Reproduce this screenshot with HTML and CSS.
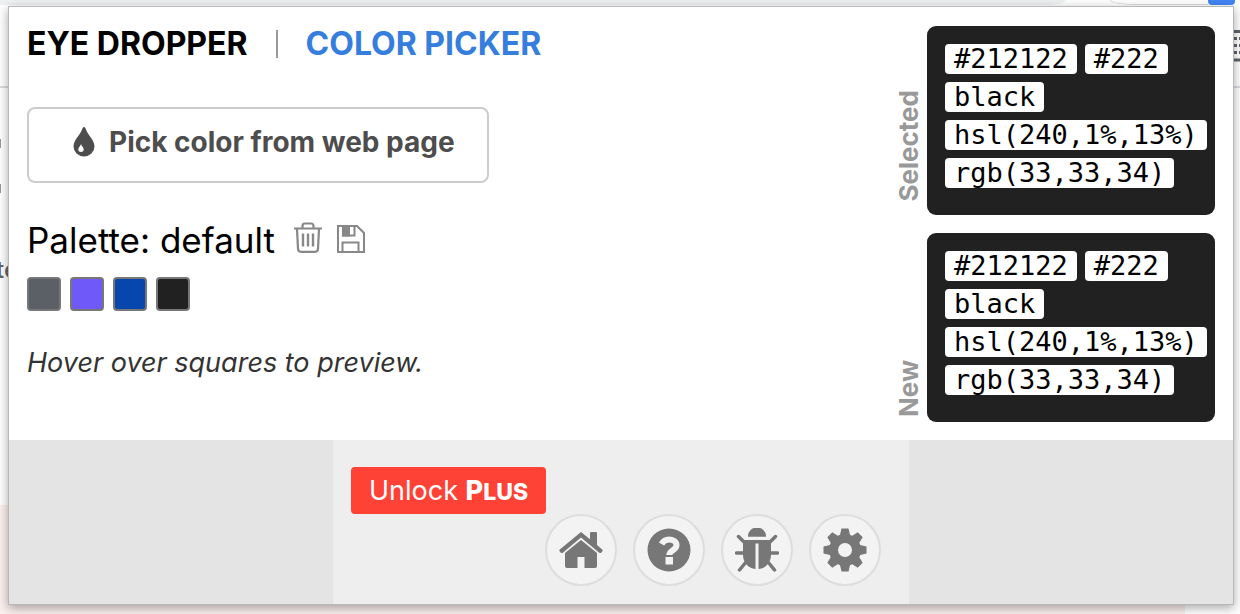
FILE: index.html
```html
<!DOCTYPE html>
<html lang="en">
<head>
<meta charset="UTF-8">
<meta name="viewport" content="width=device-width, initial-scale=1.0">
<title>Eye Dropper</title>
<link rel="stylesheet" href="styles.css">
</head>
<body>

<!-- browser page under the popup -->
<div class="backdrop" aria-hidden="true">
  <div class="tabstrip">
    <span class="tab"></span>
    <span class="avatar"></span>
    <span class="badge"></span>
  </div>
  <div class="toolbar">
    <svg class="ext-icon" width="12" height="32" viewBox="0 0 12 32">
      <path d="M0 1.5h12M0 30h12" stroke="#5f6368" stroke-width="3"/>
      <path d="M6 7h3v3H6zM11 7h3v3h-3zM6 14h3v3H6zM11 14h3v3h-3zM6 21h3v3H6zM11 21h3v3h-3z" fill="#5f6368"/>
    </svg>
  </div>
  <div class="page-top"><span class="mark"></span><span class="mark"></span><span class="page-text">te</span></div>
  <div class="page-bottom"></div>
</div>

<div class="popup">
  <div class="main">
    <div class="left">
      <nav class="tabs">
        <a class="tab-link active" href="#dropper">EYE DROPPER</a>
        <span class="divider"></span>
        <a class="tab-link" href="#picker">COLOR PICKER</a>
      </nav>

      <button class="pick-btn" type="button">
        <svg width="22" height="30" viewBox="0 0 22 30">
          <path d="M11 0C10 0 9.500 1 9 2.500C7 8.500 0.500 13 0.500 19.500a10.500 10 0 0 0 21 0C21.500 13 15 8.500 13 2.500C12.500 1 12 0 11 0z" fill="#4d4d4d"/>
          <path d="M8 17c-.5 2-2.700 3.300-2.700 5.300a2.700 2.700 0 0 0 5.400 0C10.700 20.300 8.500 19 8 17z" fill="#fff"/>
        </svg>
        <span>Pick color from web page</span>
      </button>

      <div class="palette-head">
        <h2>Palette: default</h2>
        <button class="icon-btn" type="button" aria-label="Clear palette">
          <svg width="28" height="32" viewBox="0 0 28 32" fill="none" stroke="#888" stroke-width="2.200">
            <path d="M0 7.500h28M8.500 7V5q0-2.500 2.500-2.500h6q2.500 0 2.500 2.500v2"/>
            <path d="M3 8l1 20q.2 2.800 3 2.800h14q2.800 0 3-2.800L25 8"/>
            <path d="M9 12.500v13M14 12.500v13M19 12.500v13" stroke-width="2.400"/>
          </svg>
        </button>
        <button class="icon-btn" type="button" aria-label="Save palette">
          <svg width="28" height="28" viewBox="0 0 28 28" fill="none" stroke="#888" stroke-width="2">
            <path d="M1 1h19l7 7v19H1z"/>
            <path d="M6 1v9.500h11.500V1M5.500 27v-9.500h16V27"/>
            <path d="M6 1h6v9.500H6z" fill="#888"/>
          </svg>
        </button>
      </div>

      <div class="swatches">
        <button class="swatch slate" type="button" aria-label="Slate"></button>
        <button class="swatch violet" type="button" aria-label="Violet"></button>
        <button class="swatch blue" type="button" aria-label="Blue"></button>
        <button class="swatch black" type="button" aria-label="Black"></button>
      </div>

      <p class="hint">Hover over squares to preview.</p>
    </div>

    <div class="right">
      <div class="labels">
        <span class="label">Selected</span>
        <span class="label">New</span>
      </div>
      <div class="boxes">
        <div class="color-box">
          <code>#212122</code>
          <code>#222</code>
          <code>black</code>
          <code>hsl(240,1%,13%)</code>
          <code>rgb(33,33,34)</code>
        </div>
        <div class="color-box">
          <code>#212122</code>
          <code>#222</code>
          <code>black</code>
          <code>hsl(240,1%,13%)</code>
          <code>rgb(33,33,34)</code>
        </div>
      </div>
    </div>
  </div>

  <footer class="footer">
    <div class="footer-inner">
      <a class="unlock" href="#plus">Unlock <b>P<small>LUS</small></b></a>
      <div class="links">
        <a class="round" href="#home" aria-label="Home">
          <svg width="44" height="44" viewBox="0 0 44 44" fill="#777">
            <path d="M22 4L.8 21.500q-1 1 0 2l1 1.200q1 .8 2 0L22 9.500l18.200 15.200q1 .8 2 0l1-1.200q1-1 0-2L38 17V5q0-1-1-1h-5q-1 0-1 1v6.300z"/>
            <path d="M22 12L6 25v13q0 2 2 2h10.500V29h7v11H36q2 0 2-2V25z"/>
          </svg>
        </a>
        <a class="round" href="#help" aria-label="Help">
          <svg width="44" height="44" viewBox="0 0 44 44">
            <circle cx="22" cy="22" r="21.500" fill="#777"/>
            <path d="M14.500 16c1.700-3 4-4.500 7.400-4.500c4 0 7.600 2.200 7.600 5.800c0 5-7.200 4.700-7.200 9.700" fill="none" stroke="#f3f3f3" stroke-width="6"/>
            <path d="M18.500 29h7.500v7.500h-7.500z" fill="#f3f3f3"/>
          </svg>
        </a>
        <a class="round" href="#bugs" aria-label="Report a bug">
          <svg width="44" height="44" viewBox="0 0 44 44" fill="#777">
            <path d="M13 8a9 8.500 0 0 1 18 0v.7H13z"/>
            <path d="M8 12h28v15c0 7-5 13.500-12.500 14V15.500h-3V41C13 40.500 8 34 8 27z"/>
            <path d="M9 14L3.500 8.500M35 14l5.500-5.500M9 25H1.500M35 25h7.500M11 34l-6.500 8M33 34l6.500 8" fill="none" stroke="#777" stroke-width="3.500" stroke-linecap="round"/>
          </svg>
        </a>
        <a class="round" href="#settings" aria-label="Settings">
          <svg width="44" height="44" viewBox="0 0 44 44">
            <g fill="#777">
              <circle cx="22" cy="22" r="16"/>
              <path id="tooth" d="M16.500 9L18.500 .5h7L27.500 9v26l-2 8.500h-7L16.500 35z"/>
              <use href="#tooth" transform="rotate(45 22 22)"/>
              <use href="#tooth" transform="rotate(90 22 22)"/>
              <use href="#tooth" transform="rotate(135 22 22)"/>
            </g>
            <circle cx="22" cy="22" r="7" fill="#f3f3f3"/>
          </svg>
        </a>
      </div>
    </div>
  </footer>
</div>

</body>
</html>
```

FILE: styles.css
```css
* {
  box-sizing: border-box;
}
body {
  position: relative;
  display: flex;
  min-height: 100vh;
  margin: 0;
  padding: 6px 6px 9px 8px;
  font-family: Inter, "Liberation Sans", sans-serif;
  background-color: #fff;
}

/* page behind the popup */
.backdrop {
  position: absolute;
  inset: 0;
  display: flex;
  flex-direction: column;
  overflow: hidden;
}
.tabstrip {
  display: flex;
  height: 5px;
  padding-right: 5px;
  background-color: #fff;
}
.tab {
  flex: 1;
  margin-right: 45px;
  background-color: #edf1f2;
  border-bottom-right-radius: 16px 5px;
}
.avatar {
  width: 98px;
  border-bottom: 1px solid #ddd;
  border-left: 1px solid #ddd;
  border-bottom-left-radius: 24px 5px;
}
.badge {
  width: 27px;
  background-color: #4285f4;
  border-radius: 0 0 4px 4px;
}
.toolbar {
  display: flex;
  align-items: flex-start;
  justify-content: flex-end;
  height: 83px;
  padding-top: 25px;
  border-bottom: 2px solid #dadce0;
}
.page-top {
  display: flex;
  flex-direction: column;
  height: 417px;
  padding-top: 51px;
}
.mark {
  width: 1px;
  height: 9px;
  margin-bottom: 36px;
  background-color: #999;
}
.page-text {
  margin: 27px 0 0 -4px;
  font-size: 24px;
  font-weight: 500;
  line-height: 28px;
  color: #5f6368;
}
.page-bottom {
  flex: 1;
  margin-right: 55px;
  background-color: #fbf0ee;
}

/* popup */
.popup {
  position: relative;
  display: flex;
  flex-direction: column;
  flex: 1;
  background-color: #fff;
  border: 1px solid #b8b8b8;
  box-shadow: 0 3px 10px rgba(0, 0, 0, 0.35);
}
.main {
  display: flex;
  justify-content: space-between;
  flex: 1;
  padding: 19px 18px 18px;
}
.tabs {
  display: flex;
  align-items: center;
  gap: 28px;
  height: 36px;
}
.tab-link {
  font-size: 32px;
  font-weight: bold;
  line-height: 36px;
  color: #357edd;
  text-decoration: none;
}
.tab-link.active {
  color: #000;
}
.divider {
  width: 2px;
  height: 28px;
  background-color: #999;
}
.pick-btn {
  display: flex;
  align-items: center;
  gap: 14px;
  height: 76px;
  margin-top: 45px;
  padding: 0 32px 6px 44px;
  font-family: inherit;
  font-size: 28px;
  font-weight: bold;
  color: #4d4d4d;
  background-color: #fff;
  border: 2px solid #ccc;
  border-radius: 8px;
  cursor: pointer;
}
.palette-head {
  display: flex;
  align-items: baseline;
  gap: 15px;
  height: 44px;
  margin-top: 35px;
}
h2 {
  margin: 0 4px 0 0;
  font-size: 35px;
  font-weight: normal;
  line-height: 44px;
}
.icon-btn {
  display: flex;
  padding: 0;
  background: none;
  border: none;
  cursor: pointer;
}
.swatches {
  display: flex;
  gap: 9px;
  margin-top: 15px;
}
.swatch {
  width: 34px;
  height: 34px;
  padding: 0;
  border: 2px solid #777;
  border-radius: 4px;
  cursor: pointer;
}
.slate {
  background-color: #5b6067;
}
.violet {
  background-color: #6f5af9;
}
.blue {
  background-color: #0747ad;
}
.black {
  background-color: #212121;
}
.hint {
  margin: 34px 0 0;
  font-size: 27px;
  font-style: italic;
  line-height: 36px;
  color: #333;
}
.right {
  display: flex;
  gap: 2px;
}
.labels {
  display: flex;
  flex-direction: column;
  justify-content: space-between;
  padding: 64px 0 5px;
}
.label {
  writing-mode: vertical-rl;
  transform: rotate(180deg);
  font-size: 26px;
  font-weight: bold;
  line-height: 32px;
  color: #999;
}
.boxes {
  display: flex;
  flex-direction: column;
  gap: 18px;
}
.color-box {
  display: flex;
  flex-wrap: wrap;
  align-content: flex-start;
  gap: 8px;
  width: 288px;
  padding: 18px 8px 27px 18px;
  background-color: #212121;
  border-radius: 9px;
}
code {
  padding: 0 9px;
  font-family: "DejaVu Sans Mono", monospace;
  font-size: 27px;
  line-height: 30px;
  color: #000;
  background-color: #fff;
  border-radius: 4px;
}

/* footer */
.footer {
  background-color: #e4e4e4;
}
.footer-inner {
  max-width: 576px;
  margin: 0 auto;
  padding: 27px 28px 18px 18px;
  background-color: #eee;
}
.unlock {
  display: inline-block;
  padding: 0 18px;
  font-size: 27px;
  line-height: 47px;
  color: #fff;
  text-decoration: none;
  background-color: #ff4136;
  border-radius: 4px;
  vertical-align: top;
}
.unlock b {
  font-weight: 800;
}
.unlock small {
  font-size: 23px;
  line-height: 1;
}
.links {
  display: flex;
  justify-content: flex-end;
  gap: 16px;
}
.round {
  display: flex;
  align-items: center;
  justify-content: center;
  width: 72px;
  height: 72px;
  background-color: #f3f3f3;
  border: 2px solid #ddd;
  border-radius: 50%;
}
```
